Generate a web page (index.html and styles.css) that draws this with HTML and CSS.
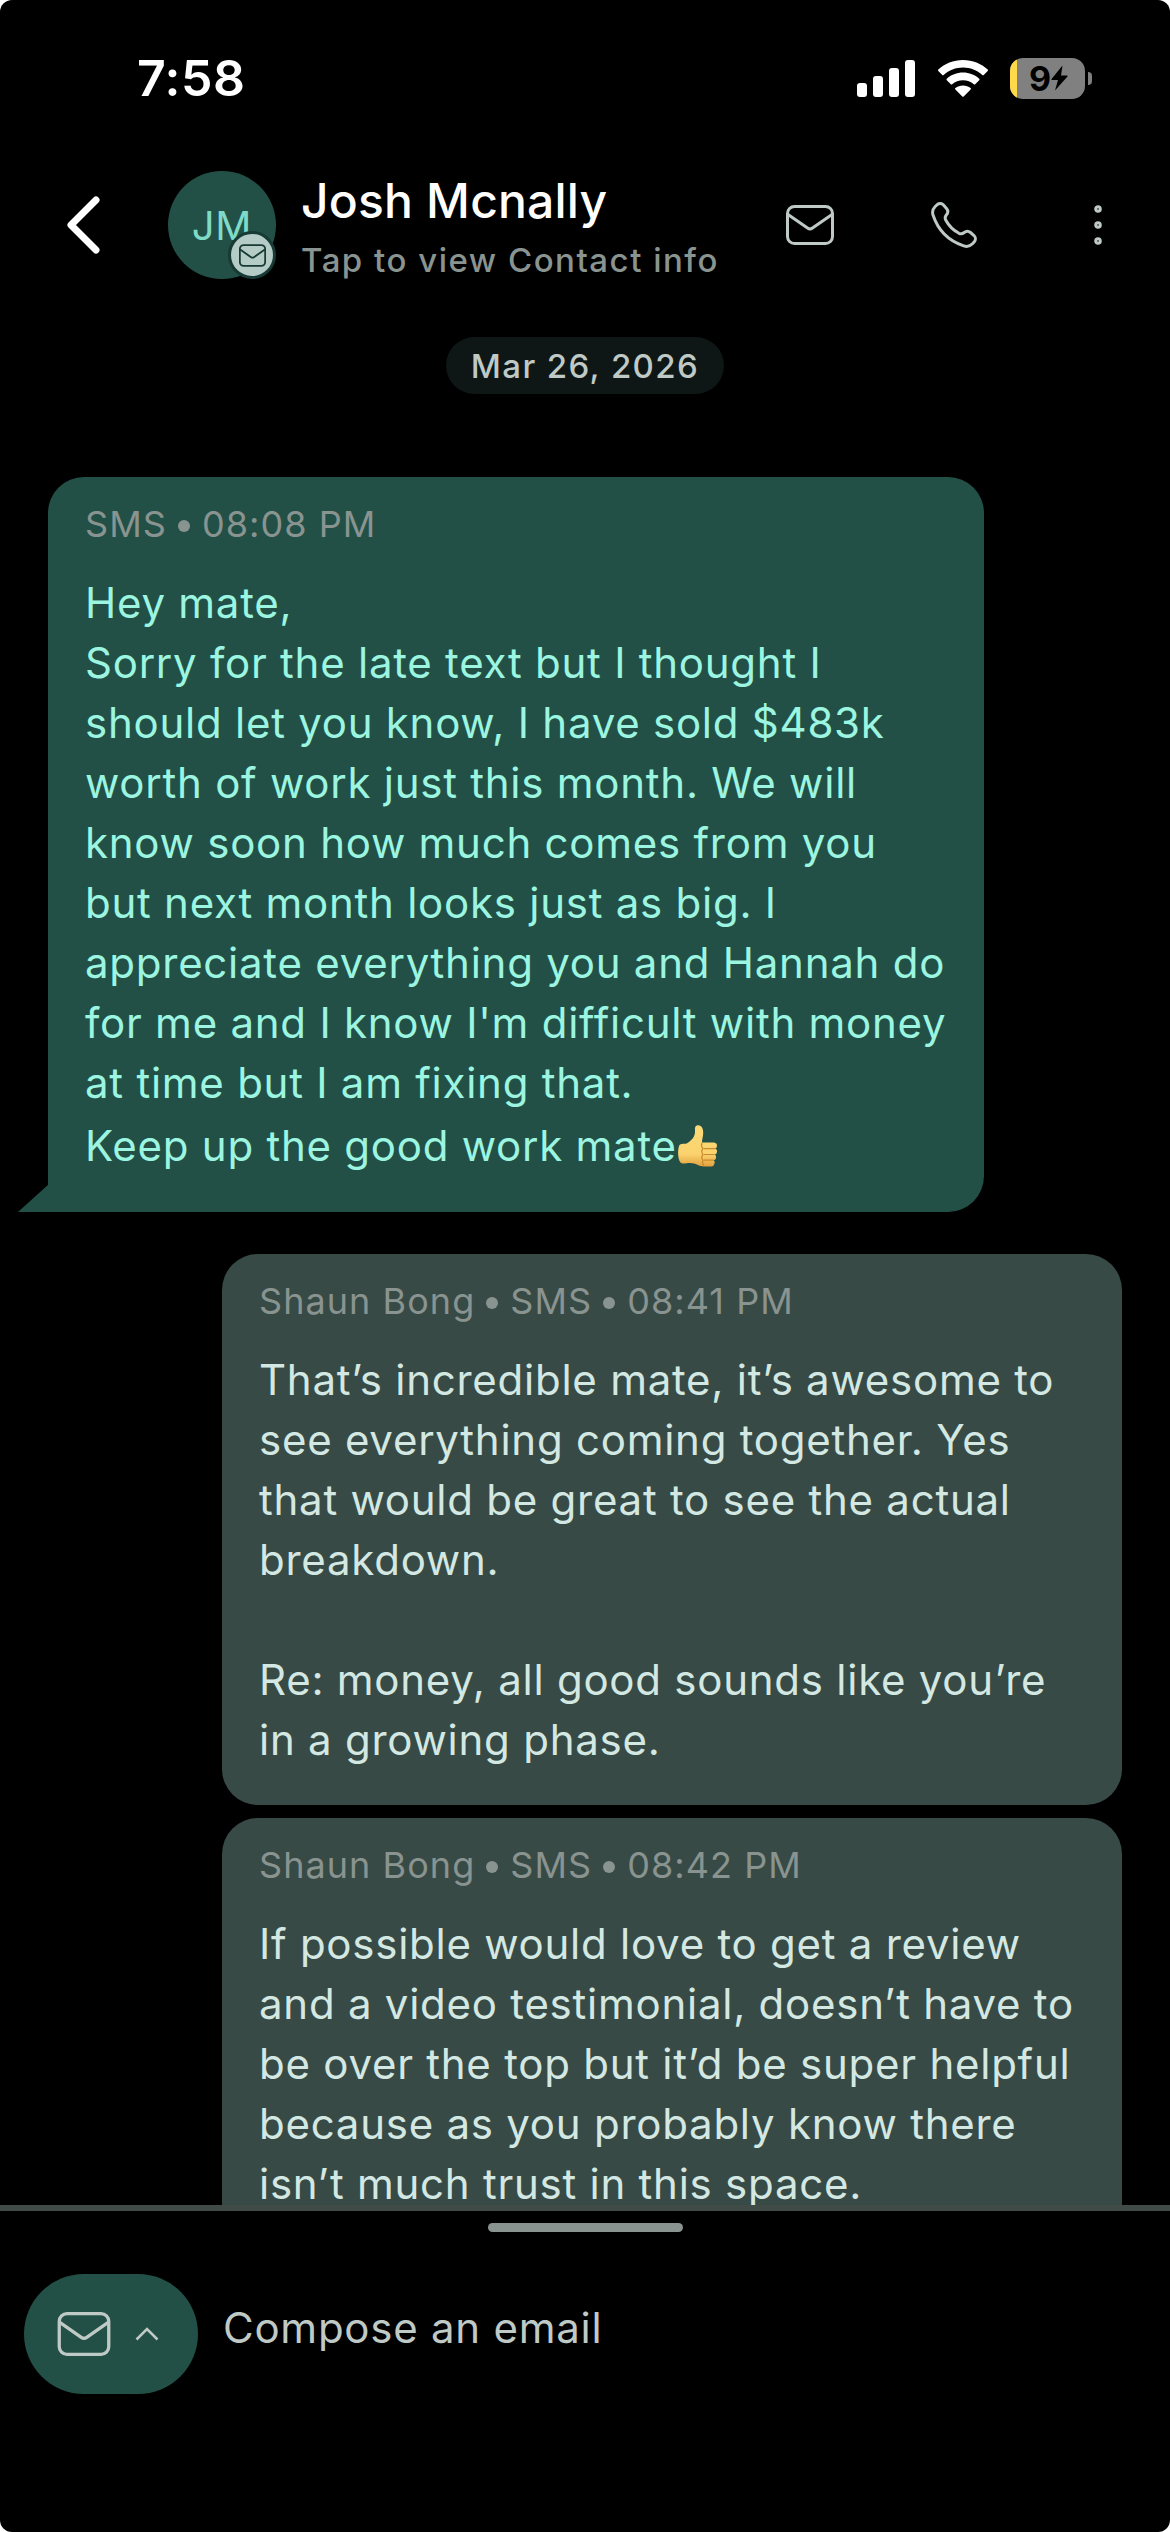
FILE: index.html
```html
<!DOCTYPE html>
<html lang="en">
<head>
<meta charset="utf-8">
<title>Josh Mcnally</title>
<link rel="stylesheet" href="styles.css">
</head>
<body>
<svg width="0" height="0" class="defs" aria-hidden="true">
  <symbol id="mail" viewBox="0 0 48 40">
    <rect x="1.5" y="1.5" width="45" height="37" rx="7"/>
    <path d="M2 9.5 L21.5 23 Q24 24.8 26.5 23 L46 9.5"/>
  </symbol>
</svg>
<div class="screen">
  <div class="status">
    <span class="time">7:58</span>
    <div class="indicators">
      <svg class="signal" viewBox="0 0 58 37"><rect x="0" y="23" width="10" height="14" rx="3"/><rect x="16" y="16" width="10" height="21" rx="3"/><rect x="32" y="8" width="10" height="29" rx="3"/><rect x="48" y="0" width="10" height="37" rx="3"/></svg>
      <svg class="wifi" viewBox="0 0 50 37"><path d="M25 0C34.6 0 43.300 3.600 49.700 9.500Q50.300 10.200 49.700 10.900L45.700 15Q45 15.600 44.300 15C39 10.200 32.300 7.500 25 7.500S11 10.200 5.700 15Q5 15.600 4.300 15L.3 10.900Q-.3 10.200 .3 9.500C6.700 3.600 15.400 0 25 0ZM25 12.600C31.200 12.600 36.900 14.900 41.200 18.800Q41.900 19.500 41.200 20.200L37.200 24.200Q36.500 24.800 35.800 24.200C32.900 21.600 29.100 20.200 25 20.200S17.100 21.600 14.200 24.200Q13.500 24.800 12.800 24.200L8.800 20.200Q8.100 19.500 8.800 18.800C13.100 14.900 18.800 12.600 25 12.600ZM25 25.400C27.900 25.400 30.500 26.400 32.600 28.100Q33.300 28.800 32.600 29.500L25.700 36.500Q25 37.100 24.300 36.500L17.400 29.500Q16.700 28.800 17.400 28.100C19.500 26.400 22.100 25.400 25 25.400Z"/></svg>
      <div class="battery"><span class="level"></span><span class="percent">9</span><svg class="bolt" viewBox="0 0 17 26"><path d="M11.500 .5 L.5 14 Q0 15 1 15 H7 L4 25.500 L16.500 11.500 Q17 10.500 16 10.500 H10 Z"/></svg></div>
      <span class="nub"></span>
    </div>
  </div>

  <header class="header">
    <svg class="back" viewBox="0 0 34 58"><path d="M30 4 L5 29 L30 54"/></svg>
    <div class="avatar"><span>JM</span><div class="badge"><svg class="mail"><use href="#mail"/></svg></div></div>
    <div class="contact"><div class="name">Josh Mcnally</div><div class="hint">Tap to view Contact info</div></div>
    <svg class="mail action-mail"><use href="#mail"/></svg>
    <svg class="phone" viewBox="0 0 46 46"><path d="M4.200 4.500 L6.200 2.700 C8 1.200 10.800 1.200 12.500 3 L15.500 6.500 C17 8.300 17 11 15.500 12.800 C14 14.600 13.700 16 14.700 18 C17.800 23.800 22.200 28.200 28 31.300 C30 32.300 31.400 32 33.200 30.500 C35 29 37.700 29 39.500 30.500 L43 33.500 C44.800 35.200 44.800 38 43.300 39.800 L41.500 41.800 C39 44.300 36 45 32.700 43.900 C17.600 38.900 7.100 28.400 2.100 13.300 C1 10 1.700 7 4.200 4.500 Z"/></svg>
    <svg class="more" viewBox="0 0 8 40"><circle cx="4" cy="4" r="2.300"/><circle cx="4" cy="20" r="2.300"/><circle cx="4" cy="36" r="2.300"/></svg>
  </header>

  <main class="thread">
    <div class="date">Mar 26, 2026</div>

    <article class="bubble incoming">
      <svg class="tail" viewBox="0 0 31 28"><path d="M31 0 V28 H0 Z"/></svg>
      <div class="meta"><span>SMS</span><i></i><span>08:08 PM</span></div>
      <p>Hey mate,<br>Sorry for the late text but I thought I<br>should let you know, I have sold $483k<br>worth of work just this month. We will<br>know soon how much comes from you<br>but next month looks just as big. I<br>appreciate everything you and Hannah do<br>for me and I know I'm difficult with money<br>at time but I am fixing that.</p>
      <p class="last">Keep up the good work mate<svg class="thumb" viewBox="0 0 40 42" role="img" aria-label="thumbs up"><defs><linearGradient id="skin" x1="0" y1="0" x2="0" y2="1"><stop offset="0" stop-color="#fcd978"/><stop offset=".7" stop-color="#fad36e"/><stop offset="1" stop-color="#e3a03f"/></linearGradient></defs><path fill="url(#skin)" d="M1.500 20C3.500 18 7 19.500 9.500 18C14 15 17.500 11 17 5C16.500 1 18.500 0 20.500 .2C23.500 .5 25 3 25.200 7C25.400 11 24 14 24 17.500H36Q39 18 39 20.500T37 23.500Q39.500 24.500 39 27T36.500 29.500Q38.500 30.500 38 33T35.500 35Q37 36 36.500 38.500T33.500 41.500H26C21 41.500 18 38 12 38C8 38 4.500 39.500 2.500 37.500C-.5 34-.5 24 1.500 20Z"/><path class="creases" d="M37 23.600H26M36.500 29.500H26M35.500 35.200H26M24 18Q22.500 21 25 23.500Q22.500 26.500 25 29.500Q22.500 32.500 25 35.200Q23.500 38 26 40.500"/></svg></p>
    </article>

    <article class="bubble outgoing">
      <div class="meta"><span>Shaun Bong</span><i></i><span>SMS</span><i></i><span>08:41 PM</span></div>
      <p>That’s incredible mate, it’s awesome to<br>see everything coming together. Yes<br>that would be great to see the actual<br>breakdown.<br><br>Re: money, all good sounds like you’re<br>in a growing phase.</p>
    </article>

    <article class="bubble outgoing next">
      <div class="meta"><span>Shaun Bong</span><i></i><span>SMS</span><i></i><span>08:42 PM</span></div>
      <p>If possible would love to get a review<br>and a video testimonial, doesn’t have to<br>be over the top but it’d be super helpful<br>because as you probably know there<br>isn’t much trust in this space.</p>
    </article>
  </main>

  <footer class="composer">
    <div class="handle"></div>
    <div class="row">
      <div class="channel"><svg class="mail"><use href="#mail"/></svg><svg class="up" viewBox="0 0 24 14"><path d="M1.500 12.500 L12 2 L22.500 12.500"/></svg></div>
      <span class="placeholder">Compose an email</span>
    </div>
  </footer>
</div>
</body>
</html>
```
FILE: styles.css
```css
* { box-sizing: border-box; }
html { background: #fff; }
body { margin: 0; font-family: Inter, "Liberation Sans", sans-serif; white-space: nowrap; }
svg { display: block; flex: none; }
.defs { position: absolute; }
.screen { width: 1170px; height: 2532px; background: #000; border-radius: 12px; overflow: hidden; display: flex; flex-direction: column; }

/* Status bar */
.status { flex: none; height: 156px; padding: 0 78px 0 137px; display: flex; justify-content: space-between; align-items: center; }
.time { color: #fff; font-size: 50px; font-weight: 600; line-height: 60px; letter-spacing: 0.5px; }
.indicators { display: flex; align-items: center; }
.signal { width: 58px; height: 37px; fill: #fff; }
.wifi { width: 50px; height: 37px; margin-left: 23px; fill: #fff; }
.battery { width: 75px; height: 41px; margin-left: 22px; background: #808080; border-radius: 13px; overflow: hidden; display: flex; align-items: center; }
.level { width: 7px; height: 41px; background: #ffd94a; }
.percent { margin-left: 12px; font-size: 34px; font-weight: 700; line-height: 41px; }
.bolt { width: 17px; height: 26px; margin-left: 0; }
.nub { width: 4px; height: 13px; margin-left: 3px; background: #808080; border-radius: 0 5px 5px 0; }

/* Contact header */
.header { flex: none; height: 138px; padding-left: 66px; display: flex; align-items: center; }
.back { width: 34px; height: 58px; fill: none; stroke: #fff; stroke-width: 7; stroke-linecap: round; stroke-linejoin: round; }
.avatar { position: relative; width: 108px; height: 108px; margin-left: 68px; border-radius: 50%; background: #225046; color: #7fdbc8; font-size: 40px; font-weight: 400; letter-spacing: 0.8px; display: flex; align-items: center; justify-content: center; }
.badge { position: absolute; right: 0; bottom: 0; width: 48px; height: 48px; border-radius: 50%; border: 3px solid #173a35; background: #b5cbc5; display: flex; align-items: center; justify-content: center; }
.mail { width: 48px; height: 40px; fill: none; stroke: #bfc9c5; stroke-width: 3; stroke-linejoin: round; }
.badge .mail { width: 27px; height: 25px; stroke: #173a35; stroke-width: 3.2; }
.contact { width: 485px; margin-left: 25px; padding-top: 9px; }
.name { color: #fff; font-size: 48px; font-weight: 500; line-height: 56px; letter-spacing: 0.2px; }
.hint { margin-top: 5px; color: #899390; font-size: 33px; font-weight: 500; line-height: 52px; letter-spacing: 1.5px; }
.phone { width: 46px; height: 46px; margin-left: 97px; fill: none; stroke: #bfc9c5; stroke-width: 3; }
.more { width: 8px; height: 40px; margin-left: 117px; fill: none; stroke: #bfc9c5; stroke-width: 3; }

/* Messages */
.thread { flex: none; height: 1911px; overflow: hidden; padding: 43px 48px 0; display: flex; flex-direction: column; }
.date { flex: none; align-self: center; width: 278px; height: 57px; border-radius: 29px; background: #0e1715; color: #bfc9c5; font-size: 33px; font-weight: 500; line-height: 58px; letter-spacing: 1.4px; text-align: center; }
.bubble { position: relative; flex: none; border-radius: 36px; padding: 23px 37px 35px; font-size: 42px; line-height: 60px; letter-spacing: 0.75px; }
.bubble p { margin: 0; }
.incoming { width: 936px; height: 735px; margin-top: 83px; border-bottom-left-radius: 0; background: #225046; color: #9bf5e0; }
.outgoing { width: 900px; height: 551px; margin: 42px 0 0 174px; background: #384a45; color: #d3e8e2; }
.outgoing.next { height: 480px; margin-top: 13px; }
.tail { position: absolute; right: 935px; bottom: 0; width: 31px; height: 28px; fill: #225046; }
.meta { height: 48px; margin-bottom: 25px; display: flex; align-items: center; color: #899390; font-size: 36px; font-weight: 400; line-height: 48px; letter-spacing: 1.05px; }
.meta i { width: 12px; height: 12px; margin: 4px 12px 0 11px; border-radius: 50%; background: #899390; }
.last { display: flex; align-items: center; height: 63px; padding-top: 3px; }
.thumb { width: 40px; height: 42px; margin: -1px 0 0 1px; }
.creases { fill: none; stroke: #c98a2b; stroke-width: 1.2; }

/* Composer */
.composer { flex: 1; border-top: 6px solid #404a47; padding: 12px 24px 0; }
.handle { width: 195px; height: 9px; margin: 0 auto; border-radius: 5px; background: #899390; }
.row { display: flex; align-items: center; margin-top: 42px; }
.channel { width: 174px; height: 120px; padding-left: 33px; border-radius: 60px; background: #225046; display: flex; align-items: center; }
.channel .mail { width: 54px; height: 44px; }
.up { width: 24px; height: 14px; margin-left: 24px; fill: none; stroke: #bfc9c5; stroke-width: 2.500; }
.placeholder { margin: -12px 0 0 25px; color: #bfc9c5; font-size: 42px; line-height: 60px; letter-spacing: 0.75px; }
```
